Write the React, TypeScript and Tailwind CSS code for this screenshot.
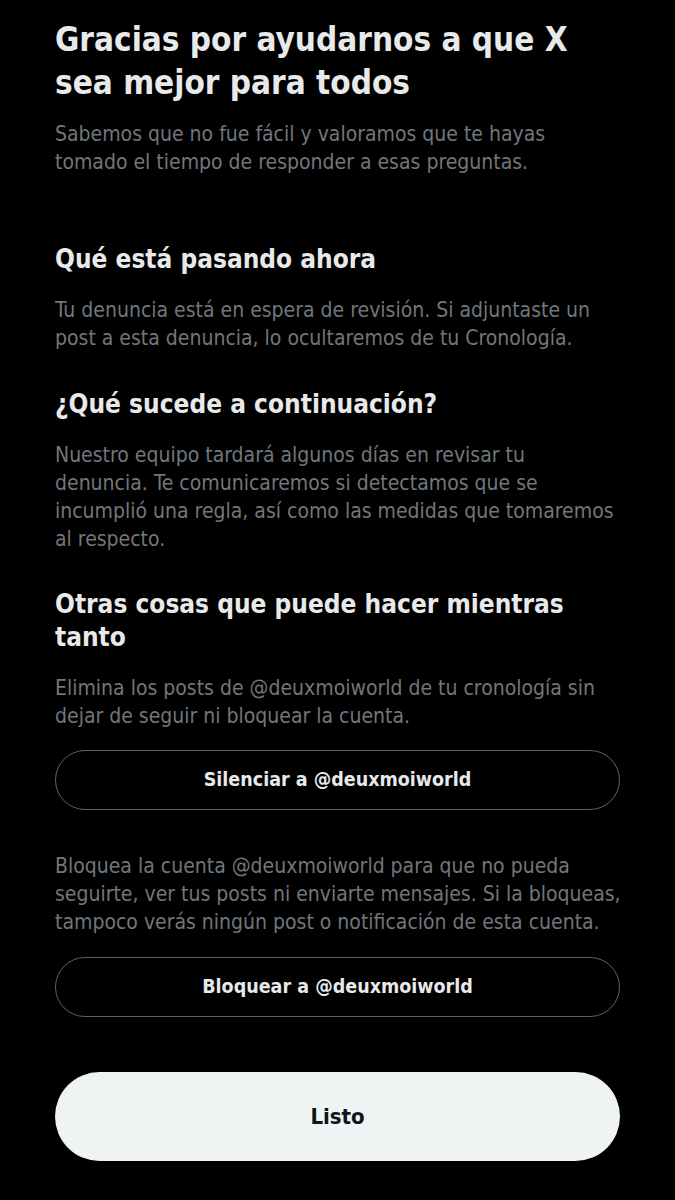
import React from 'react';

const handle = '@deuxmoiworld';

const Lines: React.FC<{ lines: string[]; className?: string }> = ({ lines, className = '' }) => (
  <p className={`whitespace-nowrap text-[21px] leading-[28px] text-[#71767b] ${className}`}>
    {lines.map((line, i) => (
      <React.Fragment key={i}>
        {line}
        {i < lines.length - 1 && <br />}
      </React.Fragment>
    ))}
  </p>
);

const OutlineButton: React.FC<{ label: string; className?: string }> = ({ label, className = '' }) => (
  <button
    className={`flex h-[60px] w-full items-center justify-center rounded-full border border-[#536471] bg-black text-[19.5px] font-bold text-[#e7e9ea] ${className}`}
  >
    {label}
  </button>
);

export default function App() {
  return (
    <div className="min-h-[1200px] bg-black px-[55px] pt-[18px] font-['DejaVu_Sans_Condensed','DejaVu_Sans',sans-serif] text-[#e7e9ea]">
      <div className="flex flex-col">
        {/* Header */}
        <h1 className="text-[33px] font-bold leading-[43px]">
          Gracias por ayudarnos a que X
          <br />
          sea mejor para todos
        </h1>
        <Lines
          className="mt-[16px]"
          lines={[
            'Sabemos que no fue fácil y valoramos que te hayas',
            'tomado el tiempo de responder a esas preguntas.',
          ]}
        />

        {/* Qué está pasando ahora */}
        <h2 className="mt-[67px] text-[26px] font-bold leading-[32px]">Qué está pasando ahora</h2>
        <Lines
          className="mt-[21px]"
          lines={[
            'Tu denuncia está en espera de revisión. Si adjuntaste un',
            'post a esta denuncia, lo ocultaremos de tu Cronología.',
          ]}
        />

        {/* Qué sucede a continuación */}
        <h2 className="mt-[36px] text-[26px] font-bold leading-[32px]">¿Qué sucede a continuación?</h2>
        <Lines
          className="mt-[21px]"
          lines={[
            'Nuestro equipo tardará algunos días en revisar tu',
            'denuncia. Te comunicaremos si detectamos que se',
            'incumplió una regla, así como las medidas que tomaremos',
            'al respecto.',
          ]}
        />

        {/* Otras cosas */}
        <h2 className="mt-[35px] text-[26px] font-bold leading-[33px]">
          Otras cosas que puede hacer mientras
          <br />
          tanto
        </h2>
        <Lines
          className="mt-[20px]"
          lines={[
            `Elimina los posts de ${handle} de tu cronología sin`,
            'dejar de seguir ni bloquear la cuenta.',
          ]}
        />
        <OutlineButton className="mt-[20px]" label={`Silenciar a ${handle}`} />

        <Lines
          className="mt-[42px]"
          lines={[
            `Bloquea la cuenta ${handle} para que no pueda`,
            'seguirte, ver tus posts ni enviarte mensajes. Si la bloqueas,',
            'tampoco verás ningún post o notificación de esta cuenta.',
          ]}
        />
        <OutlineButton className="mt-[21px]" label={`Bloquear a ${handle}`} />

        <button className="mt-[55px] flex h-[89px] w-full items-center justify-center rounded-full bg-[#eff3f4] text-[22px] font-bold text-[#0f1419]">
          Listo
        </button>
      </div>
    </div>
  );
}
